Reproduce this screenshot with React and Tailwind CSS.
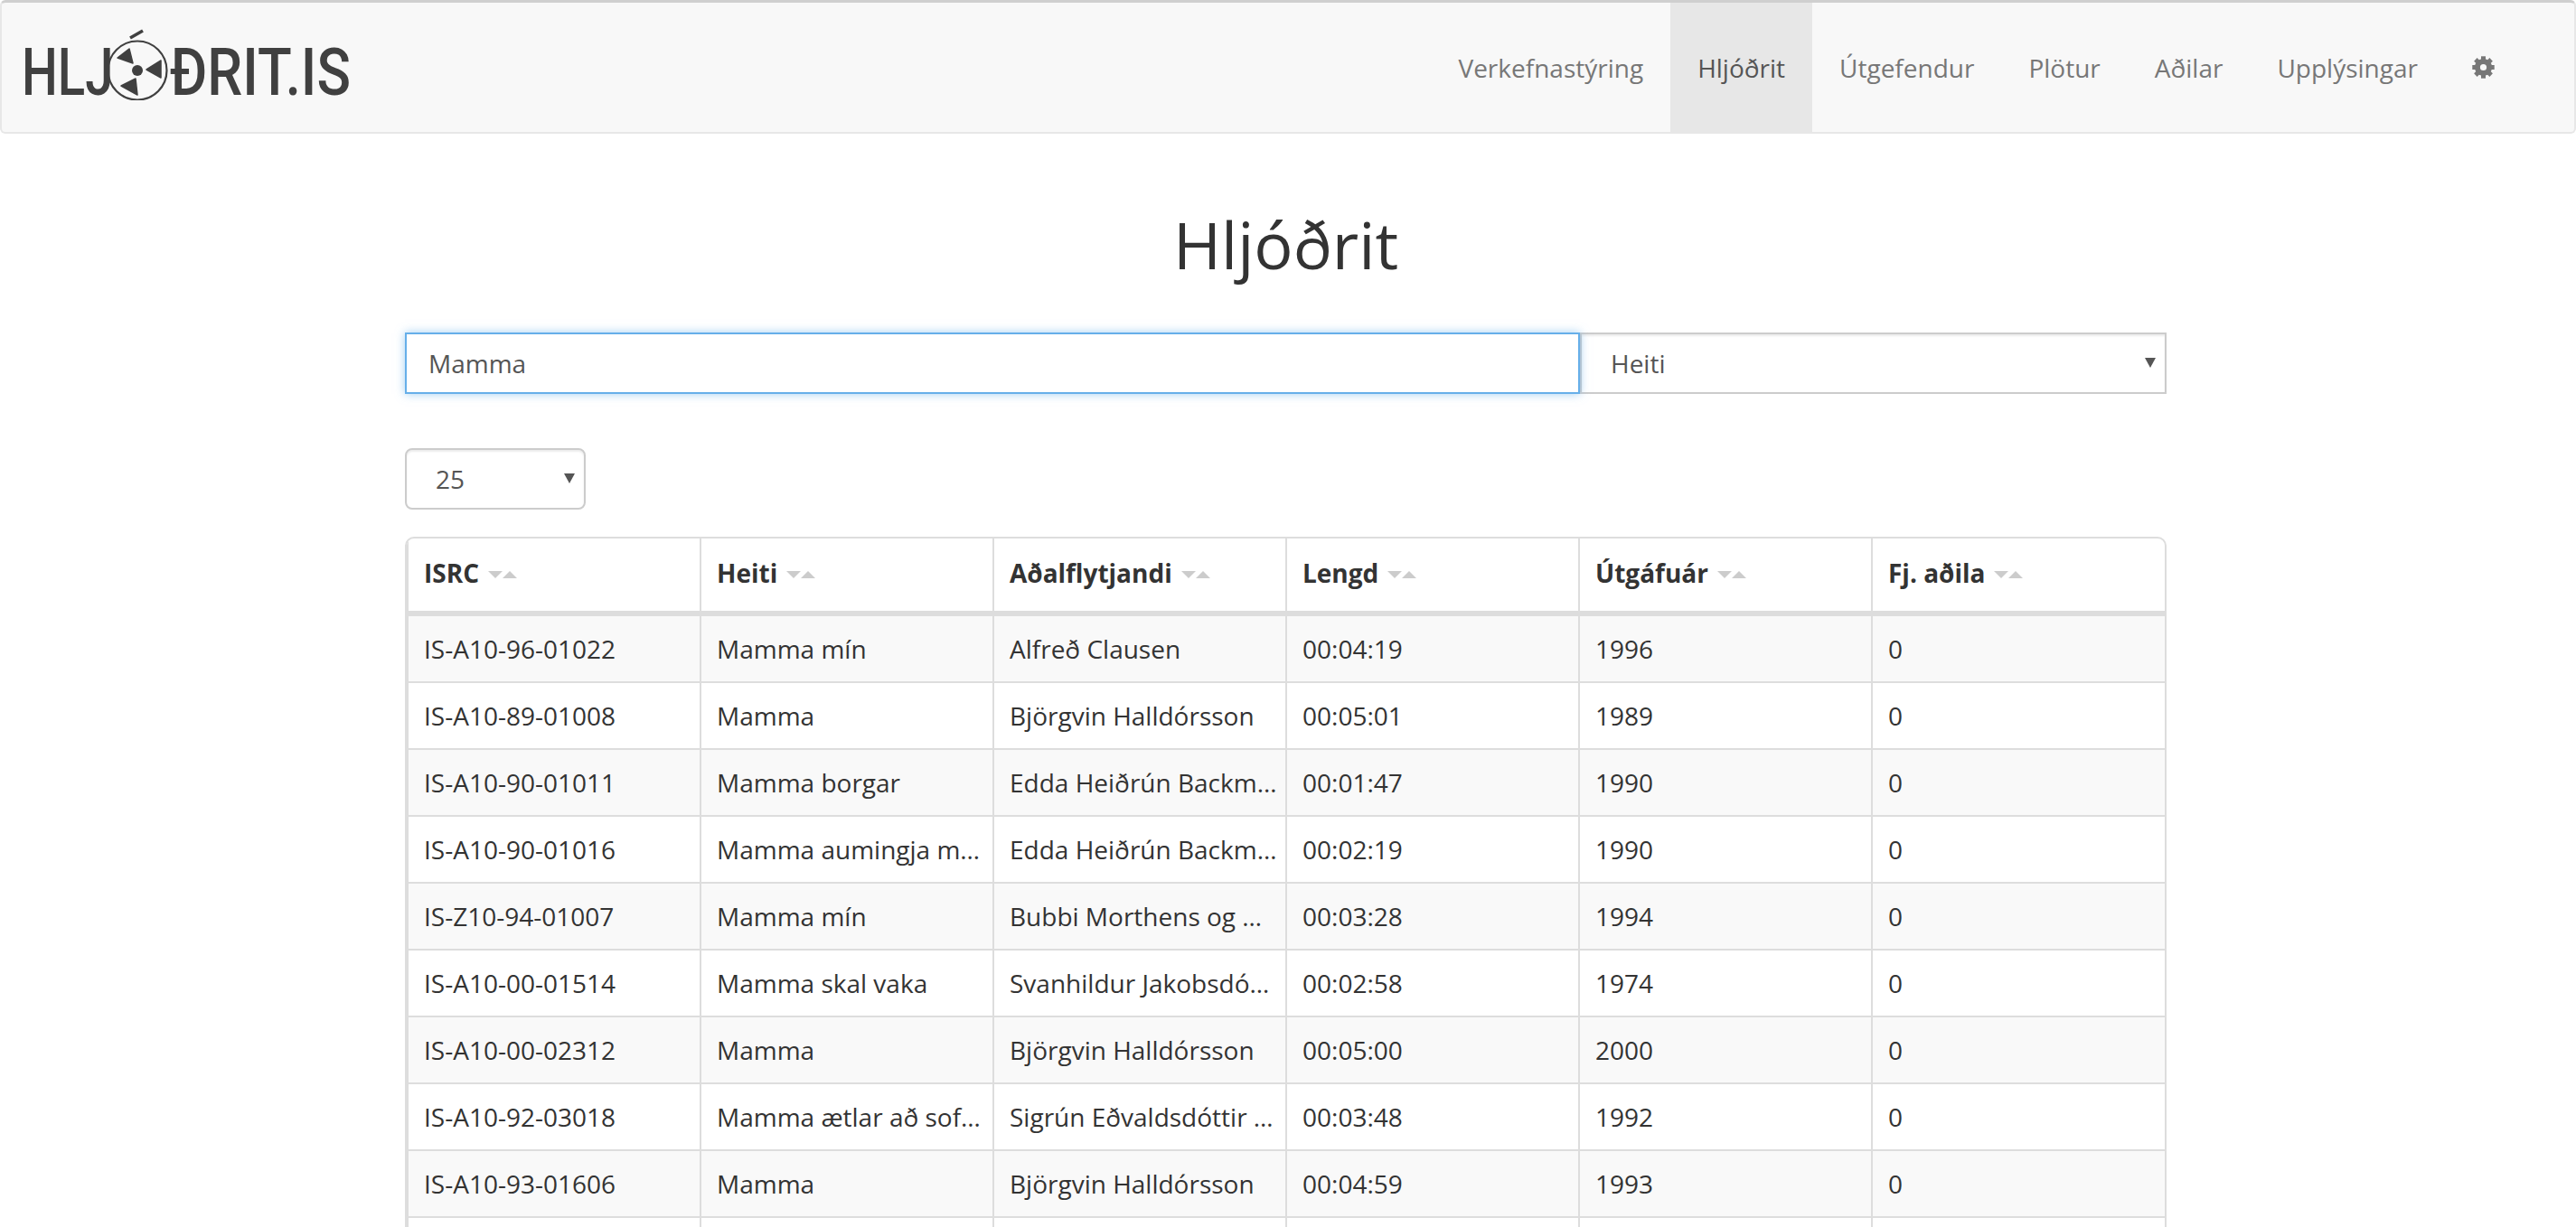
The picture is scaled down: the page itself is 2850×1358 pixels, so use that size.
import React from "react";

const rows = [
  ["IS-A10-96-01022", "Mamma mín", "Alfreð Clausen", "00:04:19", "1996", "0"],
  ["IS-A10-89-01008", "Mamma", "Björgvin Halldórsson", "00:05:01", "1989", "0"],
  ["IS-A10-90-01011", "Mamma borgar", "Edda Heiðrún Backm…", "00:01:47", "1990", "0"],
  ["IS-A10-90-01016", "Mamma aumingja m…", "Edda Heiðrún Backm…", "00:02:19", "1990", "0"],
  ["IS-Z10-94-01007", "Mamma mín", "Bubbi Morthens og …", "00:03:28", "1994", "0"],
  ["IS-A10-00-01514", "Mamma skal vaka", "Svanhildur Jakobsdó…", "00:02:58", "1974", "0"],
  ["IS-A10-00-02312", "Mamma", "Björgvin Halldórsson", "00:05:00", "2000", "0"],
  ["IS-A10-92-03018", "Mamma ætlar að sof…", "Sigrún Eðvaldsdóttir …", "00:03:48", "1992", "0"],
  ["IS-A10-93-01606", "Mamma", "Björgvin Halldórsson", "00:04:59", "1993", "0"],
  ["", "", "", "", "", ""],
];
const heads = ["ISRC", "Heiti", "Aðalflytjandi", "Lengd", "Útgáfuár", "Fj. aðila"];
const links = ["Verkefnastýring", "Hljóðrit", "Útgefendur", "Plötur", "Aðilar", "Upplýsingar"];

function Reel() {
  return (
    <svg width="70" height="80" viewBox="0 0 70 80" className="shrink-0 -mt-[20px]">
      <path d="M27 11 L41 3" stroke="#404040" strokeWidth="3.5" />
      <circle cx="35" cy="47" r="32.5" fill="none" stroke="#404040" strokeWidth="2.2" />
      <circle cx="35" cy="47" r="6" fill="#404040" />
      <path d="M13 33 L26 23 L30 39 Z M45 46 L61 36 L61 55 Z M17 64 L33 56 L35 74 Z" fill="#404040" stroke="#404040" strokeLinejoin="round" strokeWidth="1.5" />
    </svg>
  );
}

function Gear() {
  const angles = [0, 45, 90, 135, 180, 225, 270, 315];
  return (
    <svg width="25" height="25" viewBox="0 0 25 25" fill="#777777">
      <circle cx="12.5" cy="12.5" r="6.6" fill="none" stroke="#777777" strokeWidth="6" />
      {angles.map((a) => (
        <rect key={a} x="10" y="0.3" width="5" height="5" transform={`rotate(${a} 12.5 12.5)`} />
      ))}
    </svg>
  );
}

function Caret() {
  return (
    <svg width="12" height="11" viewBox="0 0 12 11" className="absolute top-[28px] right-[12px] pointer-events-none">
      <path d="M0 0 H12 L6 11 Z" fill="#555" />
    </svg>
  );
}

function SortIcon() {
  return (
    <svg width="32" height="8" viewBox="0 0 32 8" className="ml-[10px] shrink-0 mt-[3px]">
      <path d="M0 0 H16 L8 8 Z M16 8 L24 0 L32 8 Z" fill="#cccccc" />
    </svg>
  );
}

export default function App() {
  return (
    <div className="h-screen overflow-hidden bg-white font-['Open_Sans',sans-serif] text-[#333] text-[28px]">
      <nav className="h-[148px] bg-[#f8f8f8] border-t-[3px] border-t-[#cfcfcf] border-b-2 border-b-[#e7e7e7] border-x-2 border-x-[#e7e7e7] rounded-[6px] flex items-stretch justify-between">
        <div className="flex items-center pl-[22px] pt-[12px] text-[#404040] font-['Roboto',sans-serif] text-[72px] leading-none font-medium">
          <div className="w-[93px]"><span className="inline-block origin-left scale-x-[0.78]">HLJ</span></div>
          <Reel />
          <div className="w-[197px] ml-[1px]"><span className="inline-block origin-left scale-x-[0.86]">ÐRIT.IS</span></div>
        </div>
        <div className="flex items-stretch pr-[88px] h-[143px]">
          {links.map((l) => (
            <a key={l} className={"flex items-center px-[30px] " + (l === "Hljóðrit" ? "bg-[#e7e7e7] text-[#555]" : "text-[#777]")}>{l}</a>
          ))}
          <a className="flex items-center pl-[30px] text-[#777]"><Gear /></a>
        </div>
      </nav>

      <main className="w-[1949px] ml-[448px]">
        <h1 className="text-center text-[72px] font-normal leading-[80px] mt-[82px] mb-[58px] text-[#333]">Hljóðrit</h1>
        <div className="flex h-[68px]">
          <input readOnly value="Mamma" className="w-[1300px] h-full border-2 border-[#66afe9] shadow-[0_0_10px_rgba(102,175,233,0.6)] px-[24px] text-[#555] outline-none relative z-10" />
          <div className="relative flex-1">
            <select className="appearance-none w-full h-full border-2 border-[#ccc] shadow-[inset_0_2px_2px_rgba(0,0,0,0.075)] pl-[32px] text-[#555] bg-white rounded-none outline-none">
              <option>Heiti</option>
            </select>
            <Caret />
          </div>
        </div>
        <div className="relative w-[200px] h-[68px] mt-[60px]">
          <select className="appearance-none w-full h-full border-2 border-[#ccc] rounded-[8px] shadow-[inset_0_2px_2px_rgba(0,0,0,0.075)] pl-[32px] text-[#555] bg-white outline-none">
            <option>25</option>
          </select>
          <Caret />
        </div>
        <div className="mt-[30px] border-2 border-[#ddd] rounded-[10px] overflow-hidden">
          <table className="table-fixed w-full border-collapse">
            <thead>
              <tr className="h-[83px] border-b-[6px] border-b-[#ddd]">
                {heads.map((h) => (
                  <th key={h} className="border-l-2 border-[#ddd] pl-[17px] pr-[8px] pb-[4px] text-left font-bold">
                    <span className="flex items-center">{h}<SortIcon /></span>
                  </th>
                ))}
              </tr>
            </thead>
            <tbody>
              {rows.map((r, i) => (
                <tr key={i} className={(i === 0 ? "h-[76px] " : "h-[74px] ") + "border-b-2 border-b-[#ddd] " + (i % 2 === 0 ? "bg-[#f9f9f9]" : "bg-white")}>
                  {r.map((c, j) => (
                    <td key={j} className="border-l-2 border-[#ddd] pl-[17px] pr-[8px] whitespace-nowrap">{c}</td>
                  ))}
                </tr>
              ))}
            </tbody>
          </table>
        </div>
      </main>
    </div>
  );
}
